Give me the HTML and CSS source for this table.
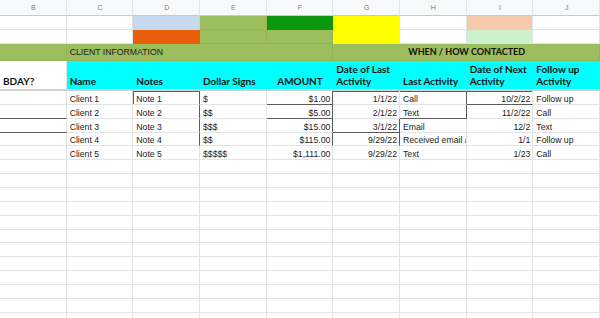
FILE: index.html
```html
<!DOCTYPE html>
<html>
<head>
<meta charset="utf-8">
<link rel="stylesheet" href="styles.css">
</head>
<body>
<div class="sheet">
  <div class="c hd">B</div><div class="c hd">C</div><div class="c hd">D</div><div class="c hd">E</div><div class="c hd">F</div><div class="c hd">G</div><div class="c hd">H</div><div class="c hd">I</div><div class="c hd">J</div>

  <div class="c"></div><div class="c"></div><div class="c blue"></div><div class="c green"></div><div class="c dkgreen"></div><div class="c yellow"></div><div class="c"></div><div class="c peach"></div><div class="c"></div>

  <div class="c"></div><div class="c"></div><div class="c orange"></div><div class="c green"></div><div class="c green"></div><div class="c yellow"></div><div class="c"></div><div class="c mint"></div><div class="c"></div>

  <div class="c green sec"></div>
  <div class="c green sec span4">CLIENT INFORMATION</div>
  <div class="c green sec span4 when">WHEN / HOW CONTACTED</div>

  <div class="c th thb">BDAY?</div>
  <div class="c th cyan">Name</div>
  <div class="c th cyan">Notes</div>
  <div class="c th cyan">Dollar Signs</div>
  <div class="c th cyan center">AMOUNT</div>
  <div class="c th cyan">Date of Last Activity</div>
  <div class="c th cyan">Last Activity</div>
  <div class="c th cyan">Date of Next Activity</div>
  <div class="c th cyan">Follow up Activity</div>

  <div class="c d"></div><div class="c d">Client 1</div><div class="c d bt bl br">Note 1</div><div class="c d">$</div><div class="c d r bb br">$1.00</div><div class="c d r bt">1/1/22</div><div class="c d bt br">Call</div><div class="c d r bt bb">10/2/22</div><div class="c d">Follow up</div>

  <div class="c d bb"></div><div class="c d">Client 2</div><div class="c d br">Note 2</div><div class="c d">$$</div><div class="c d r bb br">$5.00</div><div class="c d r">2/1/22</div><div class="c d br bb">Text</div><div class="c d r">11/2/22</div><div class="c d">Call</div>

  <div class="c d bb"></div><div class="c d">Client 3</div><div class="c d br">Note 3</div><div class="c d">$$$</div><div class="c d r br">$15.00</div><div class="c d r bb br">3/1/22</div><div class="c d">Email</div><div class="c d r">12/2</div><div class="c d">Text</div>

  <div class="c d"></div><div class="c d">Client 4</div><div class="c d br">Note 4</div><div class="c d">$$</div><div class="c d r br">$115.00</div><div class="c d r br">9/29/22</div><div class="c d clip"><span>Received email and replied</span></div><div class="c d r">1/1</div><div class="c d">Follow up</div>

  <div class="c d"></div><div class="c d">Client 5</div><div class="c d">Note 5</div><div class="c d">$$$$$</div><div class="c d r">$1,111.00</div><div class="c d r">9/29/22</div><div class="c d">Text</div><div class="c d r">1/23</div><div class="c d">Call</div>

  <div class="c"></div><div class="c"></div><div class="c"></div><div class="c"></div><div class="c"></div><div class="c"></div><div class="c"></div><div class="c"></div><div class="c"></div>
  <div class="c"></div><div class="c"></div><div class="c"></div><div class="c"></div><div class="c"></div><div class="c"></div><div class="c"></div><div class="c"></div><div class="c"></div>
  <div class="c"></div><div class="c"></div><div class="c"></div><div class="c"></div><div class="c"></div><div class="c"></div><div class="c"></div><div class="c"></div><div class="c"></div>
  <div class="c"></div><div class="c"></div><div class="c"></div><div class="c"></div><div class="c"></div><div class="c"></div><div class="c"></div><div class="c"></div><div class="c"></div>
  <div class="c"></div><div class="c"></div><div class="c"></div><div class="c"></div><div class="c"></div><div class="c"></div><div class="c"></div><div class="c"></div><div class="c"></div>
  <div class="c"></div><div class="c"></div><div class="c"></div><div class="c"></div><div class="c"></div><div class="c"></div><div class="c"></div><div class="c"></div><div class="c"></div>
  <div class="c"></div><div class="c"></div><div class="c"></div><div class="c"></div><div class="c"></div><div class="c"></div><div class="c"></div><div class="c"></div><div class="c"></div>
  <div class="c"></div><div class="c"></div><div class="c"></div><div class="c"></div><div class="c"></div><div class="c"></div><div class="c"></div><div class="c"></div><div class="c"></div>
  <div class="c"></div><div class="c"></div><div class="c"></div><div class="c"></div><div class="c"></div><div class="c"></div><div class="c"></div><div class="c"></div><div class="c"></div>
  <div class="c"></div><div class="c"></div><div class="c"></div><div class="c"></div><div class="c"></div><div class="c"></div><div class="c"></div><div class="c"></div><div class="c"></div>
  <div class="c"></div><div class="c"></div><div class="c"></div><div class="c"></div><div class="c"></div><div class="c"></div><div class="c"></div><div class="c"></div><div class="c"></div>
  <div class="c"></div><div class="c"></div><div class="c"></div><div class="c"></div><div class="c"></div><div class="c"></div><div class="c"></div><div class="c"></div><div class="c"></div>
</div>
</body>
</html>
```
FILE: styles.css
```css
html, body {
  margin: 0;
  padding: 0;
  background: #ffffff;
  overflow: hidden;
}
body {
  width: 600px;
  height: 318px;
}
.sheet {
  display: grid;
  grid-template-columns: repeat(9, 1fr);
  grid-template-rows: 16px 14px 14px 17px 30px repeat(17, 13.87px);
  width: 600px;
  font-family: "Liberation Sans", Arial, sans-serif;
  font-size: 8.7px;
  color: #222222;
}
.c {
  box-sizing: border-box;
  border-right: 1px solid #e2e3e3;
  border-bottom: 1px solid #e2e3e3;
  padding: 0 2px 0 3px;
  overflow: hidden;
  white-space: nowrap;
  display: flex;
  align-items: flex-end;
  line-height: 10px;
  --st: 0 0 0 transparent;
  --sl: 0 0 0 transparent;
  box-shadow: var(--st), var(--sl);
}
.clip {
  padding-right: 0;
}
.clip span {
  flex: none;
}
.hd {
  background: #f8f9fa;
  color: #7a7d80;
  font-size: 7px;
  justify-content: center;
  align-items: center;
  border-bottom-color: #c8cacc;
  border-right-color: #e4e5e6;
}
.blue { background: #c6d9f1; border-color: #c6d9f1 #d0d0d0 #c6d9f1 #c6d9f1; }
.orange { background: #ea5f0c; border-color: #ea5f0c; }
.green { background: #9cbd5b; border-right-color: rgba(0,0,0,0.05); border-bottom-color: rgba(0,0,0,0.05); }
.dkgreen { background: #0c980c; border-color: #0c980c; }
.yellow { background: #ffff00; border-color: #ffff00; }
.peach { background: #f6cbab; border-bottom-color: #f6cbab; border-right-color: #e2e3e3; }
.mint { background: #ccf1cf; border-bottom-color: #ccf1cf; }
.sec {
  align-items: center;
  color: #1a1a1a;
}
.span4 { grid-column: span 4; }
.when {
  justify-content: center;
  font-family: Lato, "Liberation Sans", sans-serif;
  font-weight: 700;
  font-size: 9px;
  color: #111111;
}
.th {
  font-family: Lato, "Liberation Sans", sans-serif;
  font-weight: 700;
  font-size: 10px;
  line-height: 12px;
  color: #111111;
  white-space: normal;
  padding: 0 2px 2px 3px;
  border-bottom: 2px solid #cfd1d1;
}
.cyan { background: #00ffff; border-right-color: #00ffff; }
.center { justify-content: center; }
.d { padding-bottom: 0; }
.r { justify-content: flex-end; }
.bt { --st: inset 0 1px 0 #5c5c5c; }
.bl { --sl: inset 1px 0 0 #5c5c5c; }
.br { border-right-color: #5c5c5c; }
.bb { border-bottom-color: #5c5c5c; }
```
